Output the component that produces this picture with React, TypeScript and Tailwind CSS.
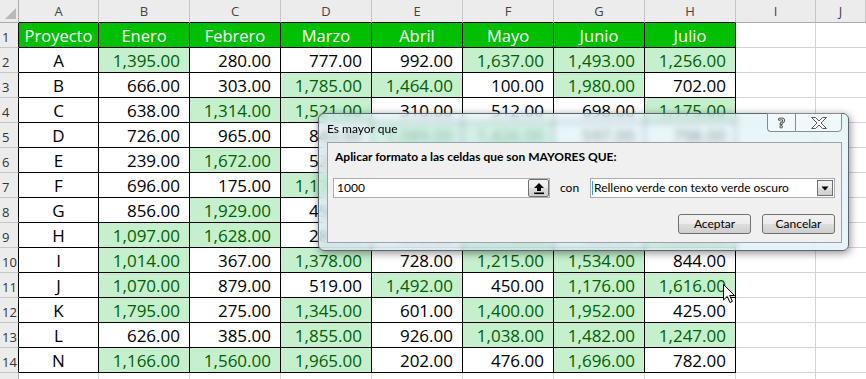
import React from "react";

type Row = [string, ...number[]];

const months = ["Proyecto", "Enero", "Febrero", "Marzo", "Abril", "Mayo", "Junio", "Julio"];

const data: Row[] = [
  ["A", 1395, 280, 777, 992, 1637, 1493, 1256],
  ["B", 666, 303, 1785, 1464, 100, 1980, 702],
  ["C", 638, 1314, 1521, 310, 512, 698, 1175],
  ["D", 726, 965, 843, 1089, 1426, 597, 798],
  ["E", 239, 1672, 523, 845, 1150, 460, 1320],
  ["F", 696, 175, 1173, 389, 1290, 755, 610],
  ["G", 856, 1929, 456, 1540, 920, 1305, 1190],
  ["H", 1097, 1628, 283, 670, 1710, 438, 1066],
  ["I", 1014, 367, 1378, 728, 1215, 1534, 844],
  ["J", 1070, 879, 519, 1492, 450, 1176, 1616],
  ["K", 1795, 275, 1345, 601, 1400, 1952, 425],
  ["L", 626, 385, 1855, 926, 1038, 1482, 1247],
  ["N", 1166, 1560, 1965, 202, 476, 1696, 782],
];

function fmt(n: number): string {
  const s = String(n);
  const withComma = s.length > 3 ? s.slice(0, s.length - 3) + "," + s.slice(-3) : s;
  return withComma + ".00";
}

const colLetters = ["A", "B", "C", "D", "E", "F", "G", "H", "I", "J"];

function HeaderRow() {
  return (
    <>
      <div className="relative bg-[#ececec] border-r border-b border-[#ababab]">
        <svg className="absolute left-[4px] top-[7px]" width="13" height="13" viewBox="0 0 13 13">
          <polygon points="1,12 12,1 12,12" fill="#b9b9b9" />
        </svg>
      </div>
      {colLetters.map((l, i) => (
        <div
          key={l}
          className={`bg-[#ececec] border-r border-[#c6c6c6] border-b flex items-center justify-center pt-[1px] text-[13px] text-[#444] ${
            i < 8 ? "border-b-black" : "border-b-[#ababab]"
          }`}
        >
          {l}
        </div>
      ))}
    </>
  );
}

function RowNum({ n, inTable }: { n?: number; inTable: boolean }) {
  return (
    <div
      className={`bg-[#ececec] border-b border-b-[#c6c6c6] border-r flex items-end pb-[2px] pl-[2px] text-[13px] leading-[16px] text-[#333] ${
        inTable ? "border-r-black" : "border-r-[#ababab]"
      }`}
    >
      {n}
    </div>
  );
}

function EmptyCell({ last }: { last?: boolean }) {
  return <div className={`border-b border-[#d4d4d4] ${last ? "" : "border-r"}`} />;
}

const btnBg = "bg-[linear-gradient(#f2f2f2,#ebebeb_50%,#dddddd_51%,#cfcfcf)]";

export default function App() {
  return (
    <div className="relative w-[866px] h-[379px] overflow-hidden bg-white font-['Open_Sans',sans-serif]">
      <div className="grid grid-cols-[19px_80px_repeat(7,91px)_80px_1fr] grid-rows-[23px_repeat(15,25px)]">
        <HeaderRow />
        {/* Row 1 */}
        <RowNum n={1} inTable />
        {months.map((m) => (
          <div
            key={m}
            className="bg-[#00c000] border-r border-b border-black flex items-center justify-center pt-[2px] text-[16.5px] text-white"
          >
            {m}
          </div>
        ))}
        <EmptyCell />
        <EmptyCell last />
        {data.map((r, ri) => (
          <React.Fragment key={ri}>
            <RowNum n={ri + 2} inTable />
            <div className="border-r border-b border-black flex items-center justify-center pt-[2px] text-[17px] text-black">
              {r[0]}
            </div>
            {(r.slice(1) as number[]).map((v, ci) => {
              const g = v > 1000;
              return (
                <div
                  key={ci}
                  className={`border-r border-b border-black flex items-center justify-end pr-[9px] pt-[2px] text-[17px] ${
                    g ? "bg-[#c6efce] text-[#006100]" : "bg-white text-black"
                  }`}
                >
                  {fmt(v)}
                </div>
              );
            })}
            <EmptyCell />
            <EmptyCell last />
          </React.Fragment>
        ))}
        {/* Row 15 (mostly cut off) */}
        <RowNum inTable={false} />
        {colLetters.map((l, i) => (
          <EmptyCell key={l} last={i === 9} />
        ))}
      </div>

      {/* Dialog */}
      <div className="absolute left-[318px] top-[113px] w-[531px] h-[138px] rounded-[6px] border border-[#5c6670] bg-[rgba(218,240,246,0.62)] backdrop-blur-[3px] shadow-[1px_2px_8px_rgba(0,0,0,0.45)] flex flex-col font-['Lato',sans-serif] text-black">
        <div className="flex h-[28px]">
          <div className="pl-[8px] pt-[7px] text-[12px] leading-[16px]">Es mayor que</div>
          <div className="flex-1" />
          <div className="flex h-[19px] mr-[6px] -mt-px">
            <div className="w-[28px] h-full border border-[#8a8a8a] border-r-0 rounded-bl-[4px] bg-[rgba(255,255,255,0.35)] flex items-center justify-center">
              <span className="font-['Open_Sans',sans-serif] text-[14px] font-bold leading-none text-transparent [-webkit-text-stroke:1px_#555]">?</span>
            </div>
            <div className="w-[47px] h-full border border-[#8a8a8a] rounded-br-[4px] bg-[rgba(255,255,255,0.35)] flex items-center justify-center">
              <svg width="18" height="12" viewBox="0 0 18 12">
                <path
                  d="M1.5,0.5 L5.5,0.5 L9,4 L12.5,0.5 L16.5,0.5 L11,6 L16.5,11.5 L12.5,11.5 L9,8 L5.5,11.5 L1.5,11.5 L7,6 Z"
                  fill="#fafafa"
                  stroke="#5a5a5a"
                  strokeWidth="1"
                />
              </svg>
            </div>
          </div>
        </div>
        <div className="ml-[8px] mr-[6px] mb-[7px] flex-1 bg-[#f0f0f0] border border-[#9aa3ab] flex flex-col pt-[7px]">
          <div className="pl-[7px] text-[12px] font-bold leading-[14px]">
            Aplicar formato a las celdas que son MAYORES QUE:
          </div>
          <div className="flex items-center mt-[14px] pl-[5px] h-[20px]">
            <div className="w-[217px] h-[20px] border border-[#abadb3] bg-white flex items-center">
              <span className="flex-1 pl-[3px] text-[12px] leading-[16px]">1000</span>
              <div className={`w-[21px] h-[18px] border border-[#6f6f6f] rounded-[2px] ${btnBg} flex items-center justify-center`}>
                <svg width="12" height="13" viewBox="0 0 12 13">
                  <polygon points="6,1 1,6 4,6 4,9 8,9 8,6 11,6" fill="#000" />
                  <rect x="1" y="10.5" width="10" height="1.6" fill="#000" />
                </svg>
              </div>
            </div>
            <span className="ml-[10px] w-[30px] text-[12px] leading-[16px]">con</span>
            <div className="w-[245px] h-[20px] border border-[#abadb3] bg-white flex items-center">
              <div className="w-px h-[14px] bg-[#3399ff] ml-[1px]" />
              <span className="flex-1 pl-[1px] text-[12px] leading-[16px] whitespace-nowrap">
                Relleno verde con texto verde oscuro
              </span>
              <div className={`w-[16px] h-[16px] mr-[1px] border border-[#6f6f6f] ${btnBg} flex items-center justify-center`}>
                <svg width="8" height="5" viewBox="0 0 8 5">
                  <polygon points="0.5,0.5 7.5,0.5 4,4.5" fill="#000" />
                </svg>
              </div>
            </div>
          </div>
          <div className="flex justify-end gap-[11px] pr-[6px] mt-[16px]">
            <div className={`w-[73px] h-[20px] border border-[#707070] rounded-[3px] ${btnBg} flex items-center justify-center text-[12px] leading-[16px]`}>
              Aceptar
            </div>
            <div className={`w-[73px] h-[20px] border border-[#707070] rounded-[3px] ${btnBg} flex items-center justify-center text-[12px] leading-[16px]`}>
              Cancelar
            </div>
          </div>
        </div>
      </div>

      {/* Mouse cursor */}
      <svg className="absolute left-[723px] top-[284px]" width="13" height="20" viewBox="0 0 13 20">
        <path d="M0.5,0.5 L0.5,16 L4.2,12.4 L7,18.5 L9.4,17.4 L6.7,11.5 L11.5,11.5 Z" fill="#fff" stroke="#000" strokeWidth="1" />
      </svg>
    </div>
  );
}
